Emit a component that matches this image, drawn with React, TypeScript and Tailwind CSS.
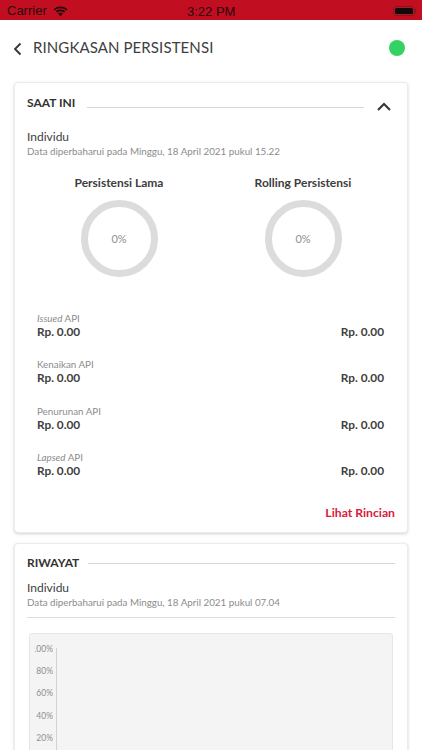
import React from 'react';

const rows = [
  { italic: 'Issued', label: ' API' },
  { italic: '', label: 'Kenaikan API' },
  { italic: '', label: 'Penurunan API' },
  { italic: 'Lapsed', label: ' API' },
];

const ticks = ['100%', '80%', '60%', '40%', '20%'];

function StatusBar() {
  return (
    <div className="relative flex h-[20px] items-center justify-between bg-[#c10e21] pl-[7px] pr-[6px] pt-[2px] font-['Liberation_Sans',sans-serif] text-[13px] text-[#2a0a0c]">
      <div className="flex items-center gap-[6px]">
        <span>Carrier</span>
        <svg width="15" height="11" viewBox="0 0 15 11" fill="#1c0507">
          <path d="M7.5 2.2c2.2 0 4.2.8 5.7 2.2l1.1-1.2C12.5 1.500 10.100.5 7.500.5S2.500 1.500.700 3.200l1.100 1.200C3.300 3 5.300 2.200 7.500 2.200z" />
          <path d="M7.500 5.200c1.300 0 2.500.5 3.500 1.300l1.100-1.200C10.900 4.200 9.300 3.500 7.500 3.500s-3.400.7-4.600 1.800L4 6.500c1-.8 2.200-1.300 3.500-1.300z" />
          <path d="M7.500 6.500c-1 0-1.800.3-2.400.9l2.400 2.800 2.400-2.800c-.6-.6-1.400-.9-2.400-.9z" />
        </svg>
      </div>
      <span className="absolute left-[187px] top-[2px] text-[13px] font-medium">3:22 PM</span>
      <div className="flex items-center">
        <div className="h-[10px] w-[22px] rounded-[3px] border border-[#7a1a22] p-[1px]">
          <div className="h-full w-full rounded-[1.5px] bg-[#12090a]" />
        </div>
        <div className="h-[4px] w-[1px] bg-[#7a1a22]" />
      </div>
    </div>
  );
}

function SectionTitle({ title }: { title: string }) {
  return <span className="text-[12px] leading-[16px] font-bold text-[#333333]">{title}</span>;
}

function Gauge({ title }: { title: string }) {
  return (
    <div className="flex w-[150px] flex-col items-center">
      <span className="text-[12px] leading-[16px] font-bold text-[#3d3d3d]">{title}</span>
      <div className="mt-[9px] flex h-[77px] w-[77px] items-center justify-center rounded-full border-[7px] border-[#dcdcdc]">
        <span className="mt-[2px] text-[11px] text-[#8f8f8f]">0%</span>
      </div>
    </div>
  );
}

function UpdatedInfo({ time }: { time: string }) {
  return (
    <div>
      <div className="text-[12px] leading-[16px] text-[#404040]">Individu</div>
      <div className="text-[9.8px] leading-[13px] text-[#8c8c8c]">Data diperbaharui pada Minggu, 18 April 2021 pukul {time}</div>
    </div>
  );
}

export default function App() {
  return (
    <div className="h-[750px] w-[422px] overflow-hidden bg-white font-['Lato','Noto_Sans',sans-serif]">
      <StatusBar />

      <div className="flex h-[54px] items-center pl-[13px] pr-[17px]">
        <svg width="9" height="14" viewBox="0 0 9 14" fill="none" stroke="#333333" strokeWidth="1.800" className="mt-[3px]">
          <path d="M7.500 1.500 2 7l5.500 5.500" />
        </svg>
        <h1 className="ml-[11px] text-[15px] leading-[20px] tracking-[0.1px] text-[#404040]">RINGKASAN PERSISTENSI</h1>
        <div className="ml-auto mt-[2px] h-[16px] w-[16px] rounded-full bg-[#34d265]" />
      </div>

      <div className="flex flex-col gap-[10px] px-[14px] pt-[8px]">
        <section className="h-[451px] rounded-[4px] border border-[#ececec] bg-white shadow-[0_1px_3px_rgba(0,0,0,0.18)]">
          <div className="flex items-start pl-[12px] pr-[16px] pt-[12px]">
            <SectionTitle title="SAAT INI" />
            <div className="ml-[12px] mt-[12px] h-[1px] flex-1 bg-[#d6d6d6]" />
            <svg width="14" height="9" viewBox="0 0 14 9" fill="none" stroke="#333333" strokeWidth="2" className="ml-[13px] mt-[7px]">
              <path d="M1 8l6-6 6 6" />
            </svg>
          </div>

          <div className="mt-[18px] px-[12px]">
            <UpdatedInfo time="15.22" />
          </div>

          <div className="mt-[17px] flex justify-between px-[29px]">
            <Gauge title="Persistensi Lama" />
            <Gauge title="Rolling Persistensi" />
          </div>

          <div className="mt-[35px] flex flex-col gap-[18.330px] pl-[22px] pr-[23px]">
            {rows.map((row, i) => (
              <div key={i}>
                <div className="text-[9.8px] leading-[12px] text-[#8c8c8c]">
                  {row.italic && <i>{row.italic}</i>}
                  {row.label}
                </div>
                <div className="flex justify-between text-[11.8px] leading-[16px] font-bold text-[#404040]">
                  <span>Rp. 0.00</span>
                  <span>Rp. 0.00</span>
                </div>
              </div>
            ))}
          </div>

          <div className="mt-[26.500px] pr-[12px] text-right text-[12.200px] leading-[16px] font-bold text-[#d7193a]">Lihat Rincian</div>
        </section>

        <section className="h-[300px] rounded-[4px] border border-[#ececec] bg-white shadow-[0_1px_3px_rgba(0,0,0,0.18)]">
          <div className="flex items-start px-[12px] pt-[11px]">
            <SectionTitle title="RIWAYAT" />
            <div className="ml-[9px] mt-[8px] h-[1px] flex-1 bg-[#d6d6d6]" />
          </div>
          <div className="mt-[9px] px-[12px]">
            <UpdatedInfo time="07.04" />
            <div className="mt-[8px] h-[1px] bg-[#dddddd]" />
          </div>
          <div className="mx-[14px] mt-[15px] flex h-[200px] rounded-[3px] border border-[#e6e6e6] bg-[#f4f4f4] pl-[5px] pt-[9px]">
            <div className="flex w-[18px] shrink-0 flex-col items-end overflow-hidden">
              {ticks.map((t) => (
                <span key={t} className="h-[22.200px] shrink-0 text-[8.5px] leading-[13px] whitespace-nowrap text-[#8f8f8f]">
                  {t}
                </span>
              ))}
            </div>
            <div className="ml-[3px] mt-[5px] w-[1px] bg-[#d2d2d2]" />
          </div>
        </section>
      </div>
    </div>
  );
}
